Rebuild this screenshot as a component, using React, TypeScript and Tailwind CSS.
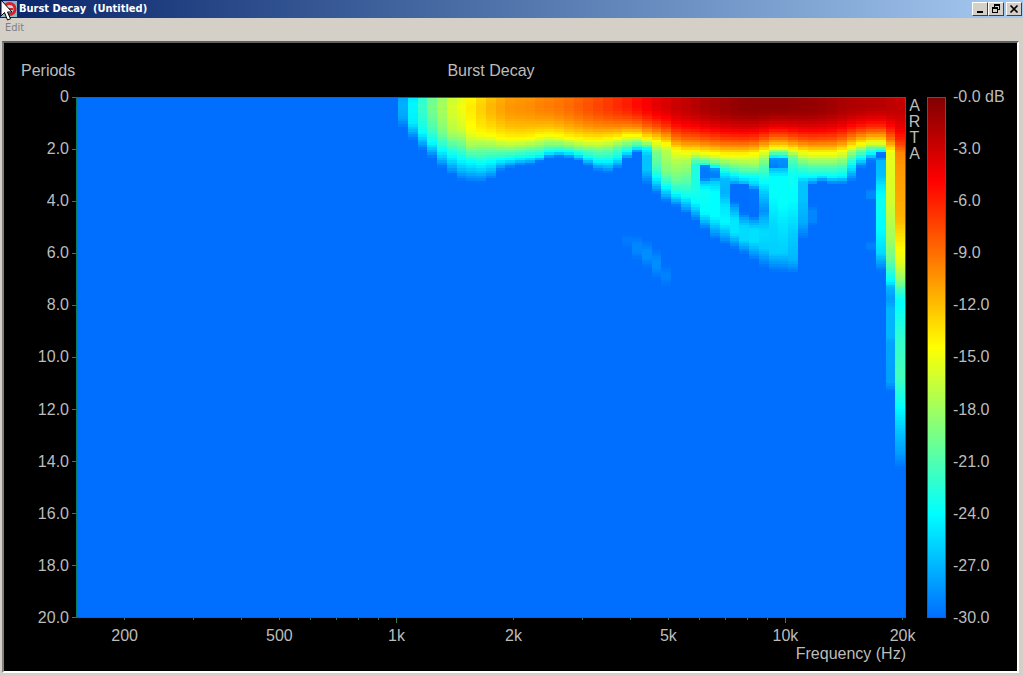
const FLOOR = -30;
const COL_WIDTH = 9.75;
const ROW_HEIGHT = 2.6;
const PLOT_WIDTH = 828;
const PLOT_HEIGHT = 520;
const FIRST_COL = 321;

type Point = [number, number];
type Slice = { top: number; points: Point[] };

// level at t = 0, then [depth, dB] pairs
const slices: Slice[] = [
  { top: -27.2, points: [[20, -27.8], [30, -30]] },
  { top: -24.2, points: [[25, -24.8], [42, -30]] },
  { top: -21.8, points: [[35, -24], [52, -30]] },
  { top: -19.4, points: [[35, -22], [45, -24], [60, -30]] },
  { top: -17.6, points: [[35, -19.5], [53, -24], [70, -30]] },
  { top: -15.8, points: [[35, -17.5], [58, -24], [77, -30]] },
  { top: -14.8, points: [[33, -16.5], [62, -24], [83, -30]] },
  { top: -13.6, points: [[35, -15], [48, -18], [64, -24], [85, -30]] },
  { top: -12.5, points: [[36, -14.4], [50, -19], [66, -24], [85, -30]] },
  { top: -11.5, points: [[37, -14.4], [50, -19], [64, -24], [82, -30]] },
  { top: -10.8, points: [[40, -14.4], [51, -19], [62, -24], [73, -30]] },
  { top: -10.2, points: [[41, -14.4], [51, -19], [61, -24], [70, -30]] },
  { top: -10, points: [[41, -14.4], [52, -20], [60, -24], [68, -30]] },
  { top: -9.8, points: [[40, -14.4], [51, -20], [59, -24], [67, -30]] },
  { top: -9.4, points: [[38, -14.4], [50, -20], [58, -24], [64, -30]] },
  { top: -9.2, points: [[37, -14.4], [48, -20], [55, -24], [60, -30]] },
  { top: -8.9, points: [[38, -14.4], [48, -20], [54, -24], [59, -30]] },
  { top: -8.5, points: [[40, -14.4], [49, -20], [55, -24], [60, -30]] },
  { top: -8, points: [[41, -14.4], [51, -20], [57, -24], [63, -30]] },
  { top: -7.5, points: [[42, -14.4], [52, -20], [60, -24], [68, -30]] },
  { top: -7, points: [[42, -14.4], [53, -20], [63, -24], [73, -30]] },
  { top: -6.5, points: [[41, -14.4], [52, -20], [63, -24], [75, -30]] },
  { top: -6, points: [[40, -14.4], [49, -20], [60, -24], [71, -30]] },
  { top: -5.4, points: [[38, -14.4], [47, -20], [54, -24], [61, -30], [136, -30], [140, -29.5], [146, -29.5], [150, -30]] },
  { top: -4.7, points: [[38, -14.4], [45, -20], [50, -24], [55, -30], [137, -30], [146, -29], [154, -29], [163, -30]] },
  { top: -4.1, points: [[41, -14.4], [46, -19], [51, -24], [58, -26.5], [72, -26.5], [87, -30], [142, -30], [153, -28.7], [160, -28.7], [171, -30]] },
  { top: -3.4, points: [[43, -14.4], [55, -19.5], [68, -21], [80, -24], [96, -30], [150, -30], [163, -28.7], [170, -28.7], [182, -30]] },
  { top: -2.9, points: [[46, -14.4], [53, -17], [75, -19.5], [87, -23], [104, -30], [166, -30], [176, -29.2], [180, -29.2], [190, -30]] },
  { top: -2.4, points: [[52, -14.4], [62, -17], [82, -20], [95, -23.5], [109, -30]] },
  { top: -2, points: [[54, -14.4], [63, -17.5], [82, -20.5], [98, -23.5], [116, -30]] },
  { top: -1.6, points: [[54, -14.4], [60, -19], [67, -22.8], [92, -23], [105, -24], [123, -30]] },
  { top: -1.2, points: [[55, -14.4], [63, -20], [67, -24], [69, -29.5], [81, -29.5], [85, -26], [93, -23.5], [115, -24], [132, -30]] },
  { top: -0.9, points: [[56, -14.4], [65, -20], [69, -24], [72, -29], [79, -29.5], [84, -26], [95, -24], [119, -24], [142, -30]] },
  { top: -0.6, points: [[57, -14.4], [67, -20], [74, -24], [82, -26.8], [95, -27.2], [109, -25], [125, -24.2], [147, -30]] },
  { top: -0.3, points: [[57, -14.4], [67, -19], [77, -24], [84, -27], [86, -30], [104, -30], [109, -28], [122, -25], [135, -25], [151, -30]] },
  { top: -0.1, points: [[57, -14.4], [67, -18.5], [77, -23], [84, -26], [87, -30], [115, -30], [120, -28], [129, -25.5], [142, -25.5], [156, -30]] },
  { top: 0, points: [[56, -14.4], [69, -19], [77, -23], [87, -26], [92, -29.7], [119, -30], [124, -27.5], [132, -25.3], [144, -25.3], [163, -30]] },
  { top: 0, points: [[53, -14.4], [60, -18], [69, -21], [82, -23.5], [97, -26.5], [113, -28.6], [122, -27], [135, -25.4], [150, -26], [170, -30]] },
  { top: 0, points: [[50, -14.4], [55, -20], [59, -25], [61, -28.5], [69, -29.5], [71, -26.5], [79, -24], [95, -23.8], [125, -25.5], [155, -26], [174, -30]] },
  { top: 0, points: [[50, -14.4], [55, -20], [59, -24.5], [61, -28.5], [69, -29], [71, -26.5], [79, -24], [105, -23.8], [125, -25], [155, -26], [175, -30]] },
  { top: -0.1, points: [[52, -14.4], [59, -20], [67, -22], [75, -23.5], [102, -24], [135, -26], [162, -27], [176, -30]] },
  { top: -0.2, points: [[54, -14.4], [62, -18.5], [72, -22.5], [79, -24], [84, -26.5], [102, -26.5], [125, -27.5], [142, -30]] },
  { top: -0.3, points: [[55, -14.4], [64, -18.5], [72, -22], [79, -24], [87, -30], [107, -30], [113, -29], [123, -29], [128, -30]] },
  { top: -0.5, points: [[55, -14.4], [64, -18.5], [72, -22], [78, -24], [84, -30]] },
  { top: -0.8, points: [[55, -14.4], [64, -18.5], [72, -22], [79, -24], [86, -30]] },
  { top: -1.1, points: [[53, -14.4], [62, -18.5], [72, -22.5], [79, -24.5], [86, -30]] },
  { top: -1.3, points: [[49, -14.4], [56, -19], [67, -24], [84, -30]] },
  { top: -1.4, points: [[46, -14.4], [52, -19], [60, -24], [70, -30]] },
  { top: -1.5, points: [[44, -14.4], [50, -20], [57, -25], [61, -29], [65, -30], [91, -30], [94, -29], [100, -29], [103, -30], [143, -30], [146, -29.3], [150, -29.3], [153, -30]] },
  { top: -1.6, points: [[44, -14.4], [47, -17], [52, -22], [54, -25], [56, -30], [60, -30], [62, -27], [79, -26.5], [87, -25], [102, -23.5], [132, -24], [155, -25.5], [174, -30]] },
  { top: -1.9, points: [[50, -13], [56, -15.3], [102, -16], [142, -18], [162, -20], [175, -22.5], [185, -24.5], [189, -27], [202, -28.2], [212, -27], [239, -27], [245, -27.8], [285, -28], [294, -30]] },
  { top: -2.2, points: [[47, -7.5], [55, -9.8], [69, -10.5], [119, -11.5], [135, -13], [155, -14.6], [165, -15.5], [182, -18.5], [195, -22.5], [205, -24], [245, -22], [279, -21.5], [305, -23.5], [315, -24.5], [335, -26.5], [355, -28], [372, -30]] },
];

const palette: [number, number[]][] = [
  [0, [128, 0, 0]],
  [-4.8, [255, 0, 0]],
  [-14.4, [255, 255, 0]],
  [-24, [0, 255, 255]],
  [-30, [0, 110, 255]],
];

function colorFor(db: number) {
  const level = Math.min(0, Math.max(FLOOR, db));
  const i = Math.max(1, palette.findIndex(([stop]) => stop <= level));
  const [hi, from] = palette[i - 1];
  const [lo, to] = palette[i];
  const t = (hi - level) / (hi - lo);
  return `rgb(${from.map((c, k) => Math.round(c + (to[k] - c) * t)).join(",")})`;
}

function levelAt({ top, points }: Slice, depth: number) {
  const [firstDepth, firstDb] = points[0];
  if (depth <= firstDepth) {
    const f = depth / firstDepth;
    return top + (firstDb - top) * f ** 2.2 - 0.6 * Math.max(0, 1 - f * 4);
  }
  const i = points.findIndex(([d]) => d >= depth);
  if (i < 0) return FLOOR;
  const [d0, a] = points[i - 1];
  const [d1, b] = points[i];
  return a + ((b - a) * (depth - d0)) / (d1 - d0);
}

const periods = ["0", "2.0", "4.0", "6.0", "8.0", "10.0", "12.0", "14.0", "16.0", "18.0", "20.0"];
const levels = ["-0.0 dB", "-3.0", "-6.0", "-9.0", "-12.0", "-15.0", "-18.0", "-21.0", "-24.0", "-27.0", "-30.0"];
const ticks = [200, 300, 400, 500, 600, 700, 800, 900, 1000, 2000, 3000, 4000, 5000, 6000, 7000, 8000, 9000, 10000, 20000];
const tickLabels: Record<number, string> = { 200: "200", 500: "500", 1000: "1k", 2000: "2k", 5000: "5k", 10000: "10k", 20000: "20k" };

function freqX(f: number) {
  return `${((Math.log10(f / 150) / 2.1338) * 100).toFixed(3)}%`;
}

function HeatMap() {
  return (
    <svg
      role="img"
      aria-label="Burst decay"
      className="block h-full w-full"
      viewBox={`0 0 ${PLOT_WIDTH} ${PLOT_HEIGHT}`}
      preserveAspectRatio="none"
      shapeRendering="crispEdges"
    >
      <rect width={PLOT_WIDTH} height={PLOT_HEIGHT} fill="#006eff" />
      {slices.map((slice, col) => {
        const x = FIRST_COL + col * COL_WIDTH;
        const last = slice.points[slice.points.length - 1][0];
        const rows = Math.ceil(last / ROW_HEIGHT);
        return (
          <g key={col}>
            {Array.from({ length: rows }, (_, row) => (
              <rect
                key={row}
                x={x}
                y={row * ROW_HEIGHT}
                width={COL_WIDTH}
                height={ROW_HEIGHT}
                fill={colorFor(levelAt(slice, (row + 0.5) * ROW_HEIGHT))}
              />
            ))}
          </g>
        );
      })}
    </svg>
  );
}

function FrequencyAxis() {
  return (
    <svg className="block h-[34px] w-full overflow-visible" shapeRendering="crispEdges">
      {ticks.map((f) => (
        <line key={f} x1={freqX(f)} x2={freqX(f)} y1="0" y2={f === 1000 || f === 10000 ? 5 : 2} stroke="#2f7d4f" />
      ))}
      {ticks
        .filter((f) => tickLabels[f])
        .map((f) => (
          <text key={f} x={freqX(f)} y="23" textAnchor="middle" fill="#bcbcbc" className="text-base">
            {tickLabels[f]}
          </text>
        ))}
    </svg>
  );
}

function AppIcon() {
  return (
    <svg className="block h-[18px] w-[18px]" viewBox="0 0 18 18" aria-hidden="true">
      <rect x="1" y="1" width="16" height="16" fill="#8fb4c4" />
      <circle cx="9.5" cy="9" r="5.5" fill="#c3d6de" stroke="#d8202c" strokeWidth="3" />
      <path d="M8 8h5v2H8z" fill="#d8202c" />
    </svg>
  );
}

function Pointer() {
  return (
    <svg className="absolute left-0 top-0 h-[21px] w-[13px]" viewBox="0 0 13 21" aria-hidden="true">
      <path d="M1 0v16l3.5-3.5L7.500 20l3-1.200L7.500 12H12z" fill="#fff" stroke="#000" />
    </svg>
  );
}

const captionButton =
  "flex h-[14px] w-4 items-center justify-center border border-t-white border-l-white border-r-[#404040] border-b-[#404040] bg-[#d4d0c8]";

function TitleBar() {
  return (
    <header className="relative flex h-[18px] items-center bg-linear-to-r from-[#0a246a] to-[#a6caf0] pr-px">
      <AppIcon />
      <h1 className="flex-1 whitespace-pre pl-px font-['DejaVu_Sans_Condensed','DejaVu_Sans',sans-serif] text-[11px] font-bold leading-[18px] text-white">
        {"Burst Decay  (Untitled)"}
      </h1>
      <button type="button" aria-label="Minimize" className={captionButton}>
        <svg className="h-[10px] w-3" viewBox="0 0 12 10" shapeRendering="crispEdges">
          <path d="M3 7h6v2H3z" />
        </svg>
      </button>
      <button type="button" aria-label="Restore" className={captionButton}>
        <svg className="h-[10px] w-3" viewBox="0 0 12 10" shapeRendering="crispEdges">
          <path d="M4 0h6v6H8V5h1V2H5v1H4zM2 3h6v6H2zM3 5v3h4V5z" fillRule="evenodd" />
        </svg>
      </button>
      <button type="button" aria-label="Close" className={`${captionButton} ml-0.5`}>
        <svg className="h-[10px] w-3" viewBox="0 0 12 10">
          <path d="M2.500 1.500l7 7M9.500 1.500l-7 7" stroke="#000" strokeWidth="1.700" />
        </svg>
      </button>
      <Pointer />
    </header>
  );
}

export default function App() {
  return (
    <div className="flex min-h-screen flex-col bg-[#d4d0c8] font-['Liberation_Sans',Arial,sans-serif]">
      <TitleBar />
      <nav className="flex h-[23px] items-start px-[5px] font-['DejaVu_Sans_Condensed','DejaVu_Sans',sans-serif]">
        <button type="button" disabled className="text-[11px] leading-5 text-[#808080]">
          Edit
        </button>
      </nav>

      <main className="mr-1 mb-[3px] ml-0.5 flex flex-1 flex-col border-2 border-t-[#606060] border-r-white border-b-white border-l-[#808080] bg-black text-base text-[#bcbcbc]">
        <div className="flex h-[54px] items-center pt-0.5 pr-[111px]">
          <span className="w-[72px] pl-[17px]">Periods</span>
          <h2 className="flex-1 text-center">Burst Decay</h2>
        </div>

        <div className="flex flex-1">
          <ol className="-my-[10px] flex w-[72px] flex-col justify-between">
            {periods.map((label) => (
              <li key={label} className="flex h-5 items-center justify-end gap-[3px] leading-5">
                {label}
                <span className="h-px w-1 bg-[#2f7d4f]" />
              </li>
            ))}
          </ol>
          <div className="flex-1 border border-[#0b7a5a] [contain:size]">
            <HeatMap />
          </div>
          <div className="flex w-[21px] flex-col items-center pt-px pr-1 text-base leading-4">
            {["A", "R", "T", "A"].map((letter, i) => (
              <span key={i}>{letter}</span>
            ))}
          </div>
          <div className="w-[19px] border border-[#0b7a5a] bg-[linear-gradient(to_bottom,#800000_0%,#ff0000_16%,#ffff00_48%,#00ffff_80%,#006eff_100%)]" />
          <ol className="-my-[10px] flex w-[71px] flex-col justify-between pl-[7px]">
            {levels.map((label) => (
              <li key={label} className="h-5 leading-5">
                {label}
              </li>
            ))}
          </ol>
        </div>

        <div className="h-[53px] pr-[111px] pl-[72px]">
          <FrequencyAxis />
          <p className="-mt-2 text-right leading-5">Frequency (Hz)</p>
        </div>
      </main>
    </div>
  );
}
